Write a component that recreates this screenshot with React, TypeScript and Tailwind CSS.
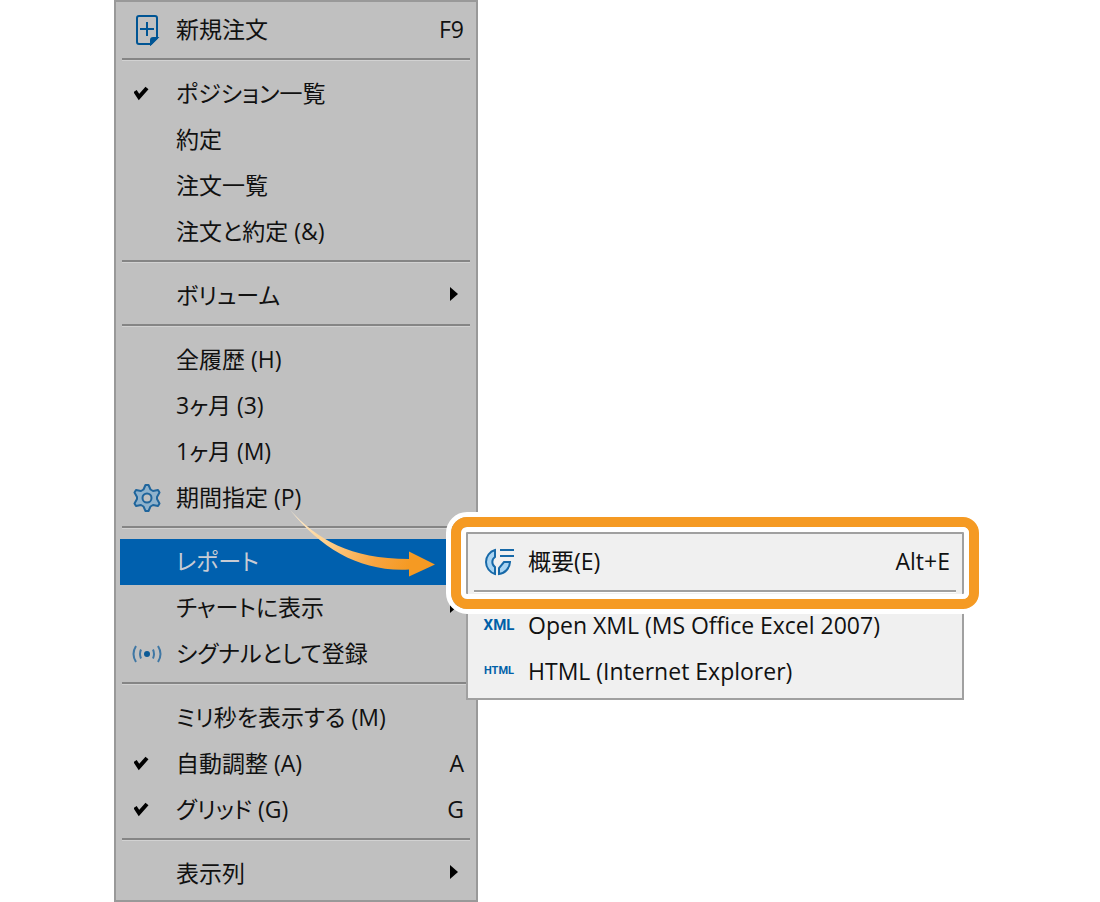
import React, { ReactNode, useState } from "react";

function NewOrderIcon() {
  return (
    <svg className="shrink-0" width="26" height="32" viewBox="0 0 26 32" fill="none" stroke="#005594" strokeWidth="2">
      <path d="M5 2h16a2 2 0 0 1 2 2v20l-6 6H5a2 2 0 0 1-2-2V4a2 2 0 0 1 2-2z" />
      <path d="M17 30v-4a2 2 0 0 1 2-2h4z" fill="#005594" />
      <path d="M13 8v14M6 15h14" />
    </svg>
  );
}

function GearIcon() {
  return (
    <svg className="shrink-0" width="28" height="30" viewBox="0 0 28 30" fill="#8fb2cc" stroke="#1f659c" strokeWidth="2" strokeLinejoin="round">
      <path d="M12.500 2h3l2 4.500 2.500 1.500 5-1 1.500 2.500L24 14v2l2.500 4.500L25 23l-5-1-2.500 1.500-2 4.500h-3l-2-4.500L8 22l-5 1-1.500-2.500L4 16v-2L1.500 9.500 3 7l5 1 2.500-1.500z" />
      <circle cx="14" cy="15" r="4.500" fill="#c0c0c0" />
    </svg>
  );
}

function SignalIcon() {
  return (
    <svg className="shrink-0" width="32" height="20" viewBox="0 0 32 20" fill="none" stroke="#3f77a4" strokeWidth="2">
      <circle cx="16" cy="10" r="3" fill="#0b5a96" stroke="none" />
      <path d="M10 5.500q-2 4.500 0 9M22 5.500q2 4.500 0 9M5 2q-5 8 0 16M27 2q5 8 0 16" />
    </svg>
  );
}

function SummaryIcon() {
  return (
    <svg className="shrink-0" width="32" height="30" viewBox="0 0 32 30" fill="#a9d4f2" stroke="#1769a8" strokeWidth="2">
      <path d="M12 3A12.500 12.500 0 0 0 12 27V20A6 6 0 0 1 12 10z" />
      <path d="M16 27V21L21 15H27A12.500 12.500 0 0 1 16 27z" />
      <path d="M17 3h14M17 9h14" />
    </svg>
  );
}

function CheckIcon() {
  return (
    <svg className="shrink-0" width="16" height="16" viewBox="0 0 16 16" fill="none" stroke="#000" strokeWidth="4">
      <path d="M1 5l4 6 8-9" />
    </svg>
  );
}

type ItemProps = {
  label: string;
  icon?: ReactNode;
  checked?: boolean;
  shortcut?: string;
  arrow?: boolean;
  active?: boolean;
  children?: ReactNode;
};

function Item({ label, icon, checked, shortcut, arrow, active, children }: ItemProps) {
  const [on, setOn] = useState(checked);
  return (
    <li role="none" className="relative">
      <button
        type="button"
        role={checked === undefined ? "menuitem" : "menuitemcheckbox"}
        aria-checked={on}
        aria-haspopup={arrow ? "menu" : undefined}
        onClick={() => checked !== undefined && setOn(!on)}
        className={
          active
            ? "flex h-[46px] w-full items-center bg-[#0060ae] pr-2 text-left text-[#c8ccd4]"
            : "flex h-[46px] w-full items-center pr-2 text-left text-[#111]"
        }
      >
        <span className="flex w-14 shrink-0 items-center pl-[14px]">
          {on ? (
            <CheckIcon />
          ) : (
            <span className="flex w-[26px] justify-center whitespace-nowrap">{icon}</span>
          )}
        </span>
        <span className="grow pb-[2px] whitespace-nowrap">{label}</span>
        {shortcut && <span className="shrink-0 pb-[2px]">{shortcut}</span>}
        {arrow && (
          <svg className="mr-[6px] mb-[4px] shrink-0" width="8" height="14" viewBox="0 0 8 14">
            <path d="M0 0v14l8-7z" fill="#000" />
          </svg>
        )}
      </button>
      {children}
    </li>
  );
}

function Divider({ light }: { light?: boolean }) {
  return (
    <li role="separator" className="px-[2px] pt-[5px] pb-[10px]">
      <div className={light ? "h-[3px] border-b border-white bg-[#a0a0a0]" : "h-[3px] border-b border-[#d2d2d2] bg-[#858585]"} />
    </li>
  );
}

function HighlightFrame() {
  return (
    <div className="pointer-events-none absolute -inset-x-[26px] -top-[27px] -bottom-[29px] z-10 flex rounded-[21px] border-[5px] border-white">
      <div className="flex grow rounded-2xl border-10 border-[#f59a23]">
        <div className="grow rounded-md border-[5px] border-white" />
      </div>
    </div>
  );
}

function PointerArrow() {
  return (
    <svg className="pointer-events-none absolute -top-[31px] left-[168px] z-20" width="150" height="72" viewBox="288 508 150 72">
      <defs>
        <linearGradient id="sweep" gradientUnits="userSpaceOnUse" x1="290" y1="510" x2="410" y2="564">
          <stop offset="0" stopColor="#fff0d8" />
          <stop offset="0.300" stopColor="#ffd596" />
          <stop offset="0.750" stopColor="#f7a440" />
          <stop offset="1" stopColor="#f59a23" />
        </linearGradient>
      </defs>
      <path
        d="M290 510C317 539 350 559 409 559V551.500L435 564.500L409 576.500V569.500C360 572 322 549 290 510z"
        fill="url(#sweep)"
      />
    </svg>
  );
}

function ReportSubmenu() {
  return (
    <ul
      role="menu"
      aria-label="レポート"
      className="absolute -top-[7px] left-full z-10 -ml-[6px] w-[498px] border-2 border-[#a0a0a0] bg-[#f0f0f0] px-1 pt-[5px] pb-[3px]"
    >
      <Item label="概要(E)" shortcut="Alt+E" icon={<SummaryIcon />}>
        <HighlightFrame />
      </Item>
      <Divider light />
      <Item
        label="Open XML (MS Office Excel 2007)"
        icon={<span className="pb-[2px] font-['Roboto',sans-serif] text-[15px] font-bold text-[#0060a8]">XML</span>}
      />
      <Item
        label="HTML (Internet Explorer)"
        icon={<span className="pb-[2px] font-['Roboto',sans-serif] text-[11px] font-bold text-[#0060a8]">HTML</span>}
      />
    </ul>
  );
}

export default function App() {
  return (
    <main className="min-h-screen bg-white pl-[114px] font-['Open_Sans','Noto_Sans_CJK_JP',sans-serif] text-[23px] leading-[44px] [font-feature-settings:'palt']">
      <ul
        role="menu"
        aria-label="操作"
        className="w-[364px] border-2 border-[#999] bg-[#c0c0c0] px-1 pt-[5px] pb-[3px]"
      >
        <Item label="新規注文" shortcut="F9" icon={<NewOrderIcon />} />
        <Divider />
        <Item label="ポジション一覧" checked />
        <Item label="約定" />
        <Item label="注文一覧" />
        <Item label="注文と約定 (&)" />
        <Divider />
        <Item label="ボリューム" arrow />
        <Divider />
        <Item label="全履歴 (H)" />
        <Item label="3ヶ月 (3)" />
        <Item label="1ヶ月 (M)" />
        <Item label="期間指定 (P)" icon={<GearIcon />} />
        <Divider />
        <Item label="レポート" arrow active>
          <ReportSubmenu />
          <PointerArrow />
        </Item>
        <Item label="チャートに表示" arrow />
        <Item label="シグナルとして登録" icon={<SignalIcon />} />
        <Divider />
        <Item label="ミリ秒を表示する (M)" />
        <Item label="自動調整 (A)" shortcut="A" checked />
        <Item label="グリッド (G)" shortcut="G" checked />
        <Divider />
        <Item label="表示列" arrow />
      </ul>
    </main>
  );
}
